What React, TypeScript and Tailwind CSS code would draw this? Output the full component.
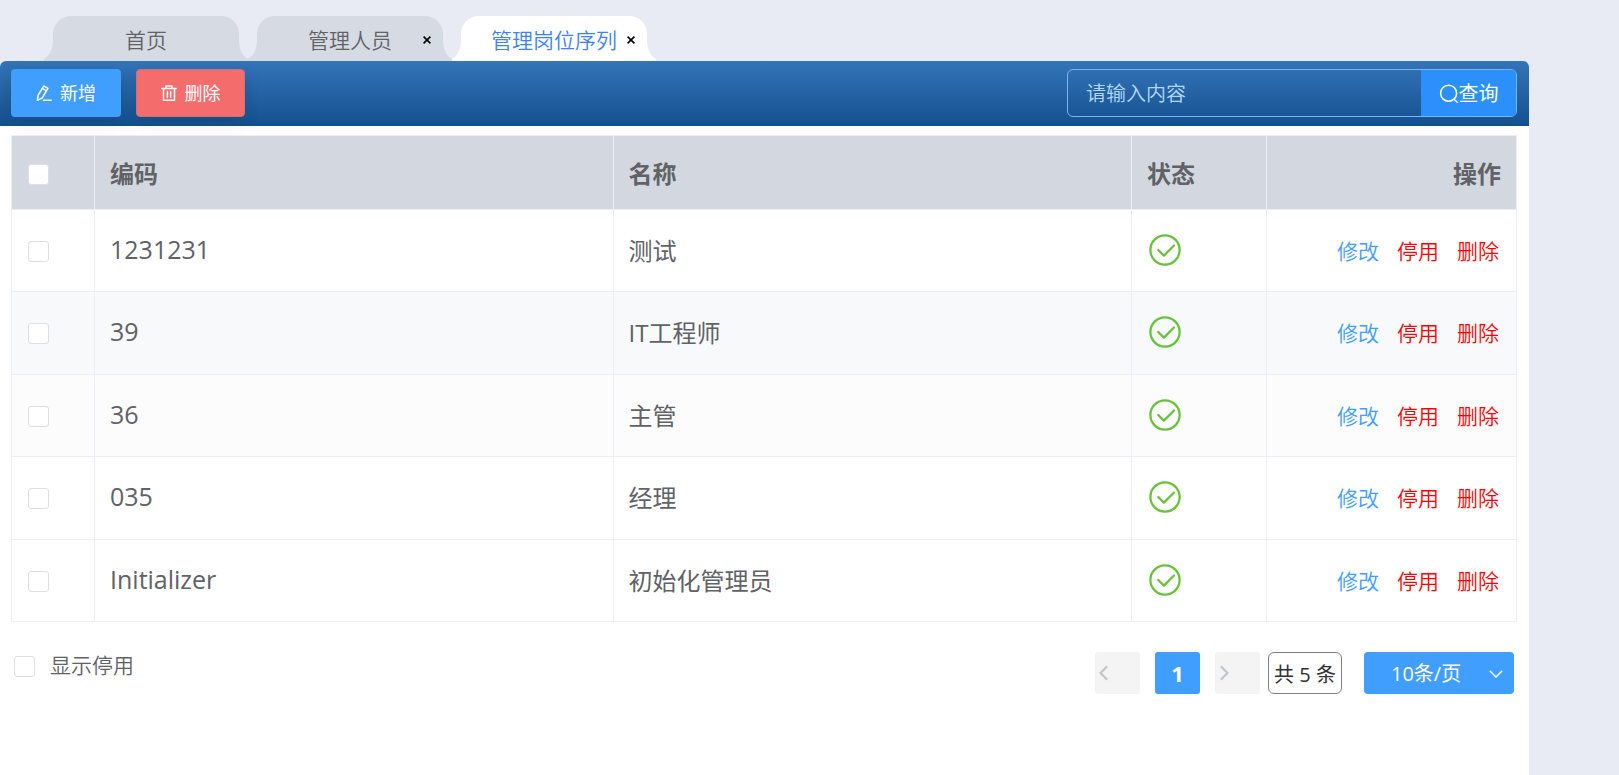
import React, { useState } from "react";

type Row = { code: string; name: string };

const rows: Row[] = [
  { code: "1231231", name: "测试" },
  { code: "39", name: "IT工程师" },
  { code: "36", name: "主管" },
  { code: "035", name: "经理" },
  { code: "Initializer", name: "初始化管理员" },
];

function EditIcon() {
  return (
    <svg viewBox="0 0 16 16" className="size-4" fill="none" stroke="currentColor" strokeWidth="1.5" strokeLinejoin="round" strokeLinecap="round" aria-hidden="true">
      <path d="M2.2 10.2 7.8 0.9 11.9 3.3 6.3 12.8 1.4 15.3Z" />
      <path d="M6.4 3.4 10.4 5.8" />
      <path d="M7.6 15.2H15.2" />
    </svg>
  );
}

function TrashIcon() {
  return (
    <svg viewBox="0 0 16 16" className="size-4" fill="none" stroke="currentColor" strokeWidth="1.5" strokeLinejoin="round" strokeLinecap="round" aria-hidden="true">
      <path d="M0.8 3.5H15.2" />
      <path d="M5 3.2V0.9H11V3.2" />
      <path d="M2.5 3.6V15.2H13.5V3.6" />
      <path d="M6.4 6.6V12.2M9.6 6.6V12.2" />
    </svg>
  );
}

function SearchIcon() {
  return (
    <svg viewBox="0 0 20 20" className="size-5" fill="none" stroke="currentColor" strokeWidth="1.5" strokeLinecap="round" aria-hidden="true">
      <circle cx="9.6" cy="9.2" r="8" />
      <path d="M15.2 15.2 18.2 18.2" />
    </svg>
  );
}

function CircleCheckIcon() {
  return (
    <svg viewBox="0 0 1024 1024" className="size-9" fill="currentColor" role="img" aria-label="启用">
      <path d="M512 896a384 384 0 1 0 0-768 384 384 0 0 0 0 768m0 64a448 448 0 1 1 0-896 448 448 0 0 1 0 896" />
      <path d="M745.344 361.344a32 32 0 0 1 45.312 45.312l-288 288a32 32 0 0 1-45.312 0l-160-160a32 32 0 1 1 45.312-45.312L480 626.752z" />
    </svg>
  );
}

function Flare({ side }: { side: "left" | "right" }) {
  return (
    <svg
      viewBox="0 0 9 20"
      className={side === "left" ? "absolute bottom-0 right-full h-5 w-[9px]" : "absolute bottom-0 left-full h-5 w-[9px] -scale-x-100"}
      fill="currentColor"
      aria-hidden="true"
    >
      <path d="M9 0V20H0V18C5 15 9 9 9 0Z" />
    </svg>
  );
}

function Tab({ label, active, closable }: { label: string; active?: boolean; closable?: boolean }) {
  return (
    <div className={active ? "relative h-[45px] w-[186px] rounded-t-[18px] bg-white text-white" : "relative h-[45px] w-[186px] rounded-t-[18px] bg-[#d6dae2] text-[#d6dae2]"}>
      <Flare side="left" />
      <Flare side="right" />
      <button type="button" className={active ? "size-full pt-1 text-[21px] font-[350] text-[#4080ff]" : "size-full pt-1 text-[21px] font-[350] text-[#606266]"}>
        {label}
      </button>
      {closable && (
        <button type="button" aria-label={"关闭" + label} className="absolute right-3 top-5 text-black">
          <svg viewBox="0 0 8 8" className="size-2" stroke="currentColor" strokeWidth="1.6" aria-hidden="true">
            <path d="M0.6 0.6 7.4 7.4M7.4 0.6 0.6 7.4" />
          </svg>
        </button>
      )}
    </div>
  );
}

const checkboxClass =
  "block size-[21px] shrink-0 appearance-none rounded-[3px] border border-[#dcdfe6] bg-white checked:border-[#409eff] checked:bg-[#409eff]";

export default function App() {
  const [selected, setSelected] = useState<string[]>([]);
  const allSelected = selected.length === rows.length;
  const toggle = (code: string) =>
    setSelected((s) => (s.includes(code) ? s.filter((c) => c !== code) : [...s, code]));

  return (
    <div className="flex min-h-screen flex-col bg-[#e8ebf4] pr-[90px] font-['Open_Sans','Noto_Sans_CJK_SC',sans-serif] text-[#606266]">
      <nav className="flex gap-[18px] pl-[53px] pt-4">
        <Tab label="首页" />
        <Tab label="管理人员" closable />
        <Tab label="管理岗位序列" active closable />
      </nav>

      <main className="flex grow flex-col rounded-t-md bg-white">
        <div className="flex h-[65px] items-start justify-between rounded-t-md bg-linear-to-b from-[#3375b9] to-[#14508f] pl-[11px] pr-3 pt-2">
          <div className="flex gap-[15px]">
            <button type="button" className="flex h-12 w-[110px] items-center justify-center gap-2 rounded bg-[#409eff] text-lg text-white shadow-[0_4px_16px_rgba(0,0,0,0.12)]">
              <EditIcon />
              新增
            </button>
            <button type="button" className="flex h-12 w-[109px] items-center justify-center gap-2 rounded border border-[#c8727c] bg-[#f56c6c] text-lg text-white shadow-[0_4px_16px_rgba(0,0,0,0.12)]">
              <TrashIcon />
              删除
            </button>
          </div>
          <form className="flex h-12 w-[450px] overflow-hidden rounded-md border border-[#7ab4f5]" onSubmit={(e) => e.preventDefault()}>
            <input
              type="text"
              aria-label="查询内容"
              placeholder="请输入内容"
              className="min-w-0 grow bg-transparent px-[18px] pt-0.5 text-xl font-[350] text-white outline-none placeholder:text-[#b3d8ff]"
            />
            <button type="submit" className="flex w-[95px] items-center justify-center bg-[#2b90fb] pt-0.5 text-xl text-white">
              <SearchIcon />
              查询
            </button>
          </form>
        </div>

        <div className="pl-[11px] pr-3 pt-[9px]">
          <table className="w-full table-fixed border-collapse text-2xl">
            <colgroup>
              <col className="w-[83px]" />
              <col />
              <col />
              <col className="w-[135px]" />
              <col className="w-[250px]" />
            </colgroup>
            <thead>
              <tr className="h-[74px] bg-[#d3d7df] text-left">
                <th className="border border-[#ebeef5] px-4 pt-1">
                  <input
                    type="checkbox"
                    aria-label="全选"
                    className={checkboxClass}
                    checked={allSelected}
                    onChange={() => setSelected(allSelected ? [] : rows.map((r) => r.code))}
                  />
                </th>
                <th className="border border-[#ebeef5] px-[15px] pt-0.5">编码</th>
                <th className="border border-[#ebeef5] px-[15px] pt-0.5">名称</th>
                <th className="border border-[#ebeef5] px-[15px] pt-0.5">状态</th>
                <th className="border border-[#ebeef5] px-[15px] pt-0.5 text-right">操作</th>
              </tr>
            </thead>
            <tbody>
              {rows.map((row) => (
                <tr key={row.code} className="h-[82px] even:h-[83px] nth-2:bg-[#f7f9fb] nth-3:bg-[#fcfcfc]">
                  <td className="border border-[#ebeef5] px-4 pt-px">
                    <input
                      type="checkbox"
                      aria-label={"选择 " + row.code}
                      className={checkboxClass}
                      checked={selected.includes(row.code)}
                      onChange={() => toggle(row.code)}
                    />
                  </td>
                  <td className="border border-[#ebeef5] px-[15px] pb-0.5 text-[25px]">{row.code}</td>
                  <td className="border border-[#ebeef5] px-[15px]">{row.name}</td>
                  <td className="border border-[#ebeef5] px-[15px] pb-0.5 text-[#67c23a]">
                    <CircleCheckIcon />
                  </td>
                  <td className="border border-[#ebeef5] px-[17px]">
                    <div className="flex justify-end gap-[18px] text-[21px] font-[350] text-[#ff0000]">
                      <a href="#edit" className="text-[#409eff]">修改</a>
                      <a href="#disable">停用</a>
                      <a href="#delete">删除</a>
                    </div>
                  </td>
                </tr>
              ))}
            </tbody>
          </table>
        </div>

        <div className="flex items-start justify-between pl-3.5 pr-[15px] pt-[30px]">
          <label className="flex items-start gap-[15px] text-[21px] font-[350] leading-[26px]">
            <input type="checkbox" className={"mt-1 " + checkboxClass} />
            显示停用
          </label>
          <div className="flex text-xl">
            <button type="button" aria-label="上一页" disabled className="mr-[15px] flex h-[42px] w-[45px] items-center rounded-[3px] bg-[#f4f4f5] pl-1 text-[#c0c4cc]">
              <svg viewBox="0 0 9 16" className="h-4 w-[9px]" fill="none" stroke="currentColor" strokeWidth="2.2" aria-hidden="true">
                <path d="M8.2 1.2 1.5 8 8.2 14.8" />
              </svg>
            </button>
            <button type="button" className="mr-[15px] h-[42px] w-[45px] rounded-[3px] bg-[#409eff] text-[22px] font-bold text-white">
              1
            </button>
            <button type="button" aria-label="下一页" disabled className="mr-2 flex h-[42px] w-[45px] items-center rounded-[3px] bg-[#f4f4f5] pl-[5px] text-[#c0c4cc]">
              <svg viewBox="0 0 9 16" className="h-4 w-[9px]" fill="none" stroke="currentColor" strokeWidth="2.2" aria-hidden="true">
                <path d="M0.8 1.2 7.5 8 0.8 14.8" />
              </svg>
            </button>
            <span className="mr-[22px] flex h-[42px] w-[74px] items-center justify-center whitespace-pre rounded-md border border-[#808080] pt-1 text-[#303133]">
              共 <span className="font-medium">5</span> 条
            </span>
            <div className="relative">
              <select aria-label="每页条数" className="h-[42px] w-[150px] appearance-none rounded bg-[#409eff] pl-[27px] pt-0.5 text-xl text-white outline-none">
                <option>10条/页</option>
                <option>20条/页</option>
                <option>50条/页</option>
              </select>
              <svg viewBox="0 0 14 8" className="pointer-events-none absolute right-[11px] top-[18px] h-2 w-3.5" fill="none" stroke="currentColor" strokeWidth="1.3" color="#fff" aria-hidden="true">
                <path d="M0.8 0.8 7 7 13.2 0.8" />
              </svg>
            </div>
          </div>
        </div>
      </main>
    </div>
  );
}
